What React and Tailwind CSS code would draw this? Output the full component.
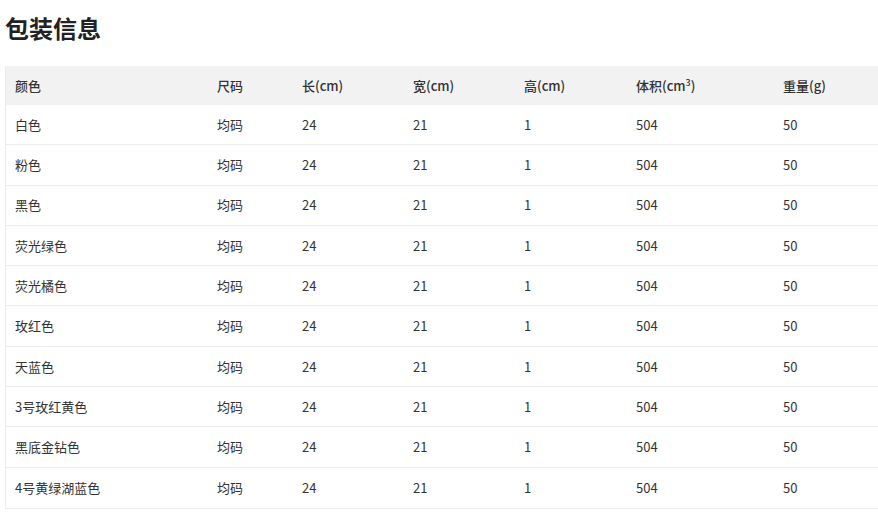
import React from 'react';

const rows = [
    '白色', '粉色', '黑色', '荧光绿色', '荧光橘色', '玫红色', '天蓝色', '3号玫红黄色', '黑底金钻色', '4号黄绿湖蓝色',
];

const cols = 'grid grid-cols-[202px_85px_111px_111px_112px_147px_1fr]';

export default function App() {
    return (
        <div className="w-[878px] h-[519px] bg-white text-[#333] overflow-hidden" style={{ fontFamily: '"Noto Sans CJK SC", "Noto Sans", sans-serif' }}>
            <h2 className="pl-[5px] pt-[10px] h-[66px] text-[24px] font-bold text-[#222] leading-[36px]">包装信息</h2>
            <div className="ml-[5px] border-l border-b border-[#ececec] text-[13px]">
                <div className={`${cols} h-[39px] items-center bg-[#f2f2f2] font-medium`}>
                    <div className="pl-[9px]">颜色</div>
                    <div className="pl-[9px]">尺码</div>
                    <div className="pl-[9px]">长(cm)</div>
                    <div className="pl-[9px]">宽(cm)</div>
                    <div className="pl-[9px]">高(cm)</div>
                    <div className="pl-[9px]">体积(cm<sup className="text-[9px]">3</sup>)</div>
                    <div className="pl-[9px]">重量(g)</div>
                </div>
                {rows.map((c, i) => (
                    <div key={i} className={`${cols} h-[40.3px] items-center ${i < rows.length - 1 ? 'border-b border-[#ececec]' : ''}`}>
                        <div className="pl-[9px]">{c}</div>
                        <div className="pl-[9px]">均码</div>
                        <div className="pl-[9px]">24</div>
                        <div className="pl-[9px]">21</div>
                        <div className="pl-[9px]">1</div>
                        <div className="pl-[9px]">504</div>
                        <div className="pl-[9px]">50</div>
                    </div>
                ))}
            </div>
        </div>
    );
}
